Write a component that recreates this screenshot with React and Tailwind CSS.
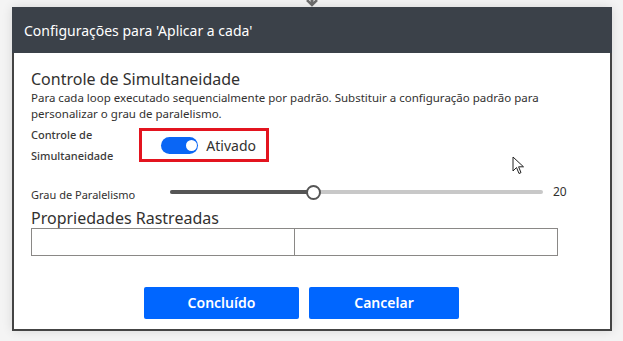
import React, { useState } from "react";

const font = { fontFamily: "'Noto Sans', 'Open Sans', sans-serif" };

const Toggle = ({ on, onChange }) => (
  <button
    onClick={() => onChange(!on)}
    className={`relative w-[40px] h-[17px] rounded-full ${on ? "bg-[#0a66f5]" : "bg-[#8a8a8a]"}`}
  >
    <span
      className={`absolute top-[3px] w-[11px] h-[11px] rounded-full bg-white ${on ? "left-[25px]" : "left-[4px]"}`}
    />
  </button>
);

const Slider = ({ value, max }) => {
  const pct = (value / max) * 100;
  return (
    <div className="relative flex-1 h-[14px] flex items-center">
      <div className="w-full h-[4px] rounded-full bg-[#c8c8c8]" />
      <div
        className="absolute left-0 h-[4px] rounded-full bg-[#555555]"
        style={{ width: `${pct}%` }}
      />
      <div
        className="absolute w-[15px] h-[15px] -ml-[7px] rounded-full bg-white border-2 border-[#555555]"
        style={{ left: `${pct}%` }}
      />
    </div>
  );
};

export default function App() {
  const [enabled, setEnabled] = useState(true);

  return (
    <div className="relative w-[623px] h-[341px] bg-[#f4f4f4] overflow-hidden" style={font}>
      {/* connector arrow peeking above dialog */}
      <svg className="absolute left-[305px] top-0" width="14" height="8" viewBox="0 0 14 8">
        <path d="M2 0 L7 5 L12 0" fill="none" stroke="#6e6e6e" strokeWidth="2.5" />
        <rect x="5.5" y="0" width="3" height="3" fill="#6e6e6e" />
      </svg>

      <div className="absolute left-[12px] top-[7px] w-[600px] h-[324px] flex flex-col bg-white border-2 border-t-0 border-[#444444] shadow-[0_0_10px_rgba(0,0,0,0.12)]">
        <div className="h-[46px] -mx-[2px] bg-[#3b4149] flex items-center px-[12px]">
          <span className="text-white text-[14px]">Configurações para 'Aplicar a cada'</span>
        </div>

        <div className="flex-1 flex flex-col pl-[17px] pt-[16px] text-[#323130]">
          <h2 className="text-[16px] leading-[20px]">Controle de Simultaneidade</h2>
          <p className="text-[11.5px] leading-[16px] whitespace-nowrap mt-[1px]">
            Para cada loop executado sequencialmente por padrão. Substituir a configuração padrão para
            <br />
            personalizar o grau de paralelismo.
          </p>

          <div className="flex items-center mt-[2px]">
            <div className="w-[108px] text-[11px] leading-[21px] font-medium text-[#3b3a39]">
              Controle de
              <br />
              Simultaneidade
            </div>
            <div className="flex items-center gap-[8px] h-[34px] border-[3px] border-[#e3141f] pl-[19px] pr-[10px] w-[130px]">
              <Toggle on={enabled} onChange={setEnabled} />
              <span className="text-[14px]">{enabled ? "Ativado" : "Desativado"}</span>
            </div>
          </div>

          <div className="flex items-center w-[538px] mt-[15px]">
            <span className="w-[139px] text-[11px] mt-[6px]">Grau de Paralelismo</span>
            <Slider value={20} max={52} />
            <span className="w-[16px] ml-[10px] text-[12px]">20</span>
          </div>

          <h2 className="text-[16px] leading-[20px] mt-[4px]">Propriedades Rastreadas</h2>
          <div className="flex w-[527px] h-[28px]">
            <input className="w-[264px] h-full border border-[#8a8886] outline-none px-2 text-[12px]" />
            <input className="flex-1 h-full border border-l-0 border-[#8a8886] outline-none px-2 text-[12px]" />
          </div>

          <div className="flex gap-[10px] mt-[31px] ml-[113px]">
            <button className="w-[155px] h-[32px] rounded-[2px] bg-[#0066ff] text-white text-[14px] font-semibold">
              Concluído
            </button>
            <button className="w-[150px] h-[32px] rounded-[2px] bg-[#0066ff] text-white text-[14px] font-semibold">
              Cancelar
            </button>
          </div>
        </div>
      </div>

      {/* mouse cursor */}
      <svg className="absolute left-[512px] top-[156px]" width="14" height="20" viewBox="0 0 14 20">
        <path
          d="M1 1 L1 15 L4.5 11.5 L7 17.5 L9 16.6 L6.6 10.8 L11.5 10.8 Z"
          fill="white"
          stroke="#222"
          strokeWidth="1"
          strokeLinejoin="round"
        />
      </svg>
    </div>
  );
}
